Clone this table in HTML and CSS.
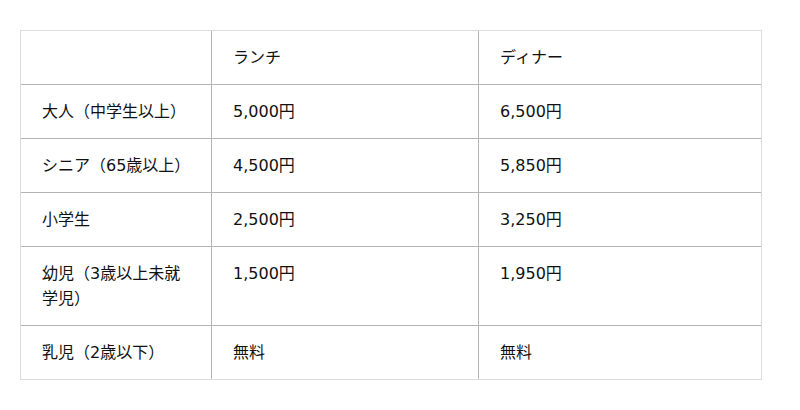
FILE: index.html
```html
<!DOCTYPE html>
<html lang="ja">
<head>
<meta charset="utf-8">
<link rel="stylesheet" href="styles.css">
</head>
<body>
<table class="price">
  <colgroup>
    <col class="c1"><col class="c2"><col class="c3">
  </colgroup>
  <tr><td></td><td>ランチ</td><td>ディナー</td></tr>
  <tr><td>大人（中学生以上）</td><td>5,000円</td><td>6,500円</td></tr>
  <tr><td>シニア（65歳以上）</td><td>4,500円</td><td>5,850円</td></tr>
  <tr><td>小学生</td><td>2,500円</td><td>3,250円</td></tr>
  <tr><td>幼児（3歳以上未就学児）</td><td>1,500円</td><td>1,950円</td></tr>
  <tr><td>乳児（2歳以下）</td><td>無料</td><td>無料</td></tr>
</table>
</body>
</html>
```
FILE: styles.css
```css
html, body {
  margin: 0;
  background: #fff;
}
body {
  padding: 30px 20px;
  font-family: "DejaVu Sans", "Noto Sans CJK JP", sans-serif;
  font-size: 16px;
  color: #111;
}
.price {
  width: 742px;
  table-layout: fixed;
  border-collapse: separate;
  border-spacing: 0;
  border: 1px solid #dcdcdc;
}
.c1 { width: 190px; }
.c2 { width: 267px; }
.c3 { width: 283px; }
.price td {
  padding: 14px 21px 14px 21px;
  line-height: 25px;
  vertical-align: top;
  text-align: left;
}
.price td + td {
  border-left: 1px solid #b4b4b4;
}
.price tr + tr td {
  border-top: 1px solid #b4b4b4;
}
```
